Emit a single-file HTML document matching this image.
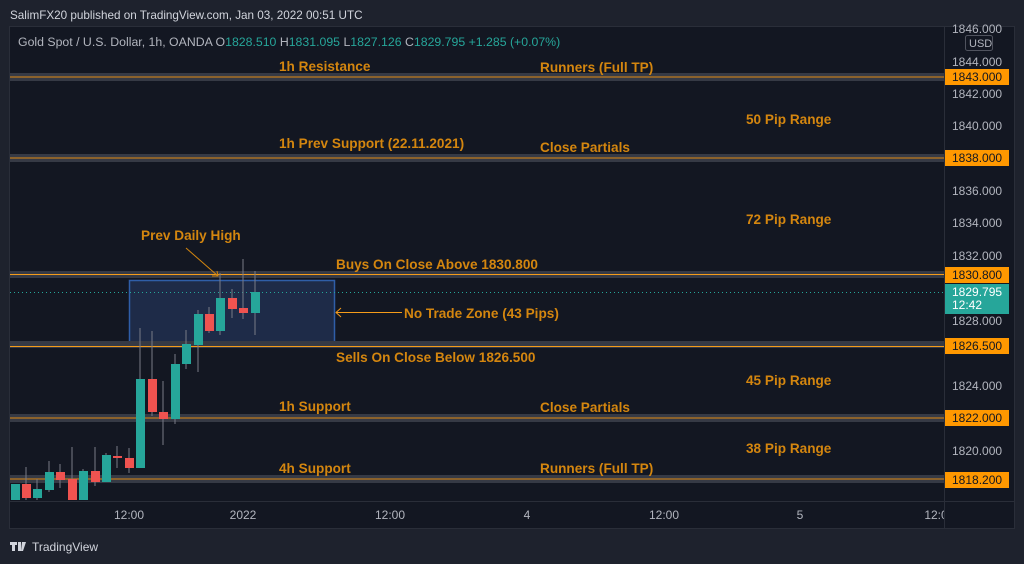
<!DOCTYPE html>
<html><head><meta charset="utf-8"><style>
html,body{margin:0;padding:0;background:#1e222d;width:1024px;height:564px;overflow:hidden}
svg{display:block}
text{font-family:"Liberation Sans",sans-serif}
.lb{fill:#d4860f;font-size:13.6px;font-weight:bold}
.ax{fill:#b2b5be;font-size:12px}
.ol{fill:#131722;font-size:12px}
</style></head><body>
<svg width="1024" height="564" viewBox="0 0 1024 564">
<rect width="1024" height="564" fill="#1e222d"/>
<text x="10" y="19" fill="#d1d4dc" font-size="11.7">SalimFX20 published on TradingView.com, Jan 03, 2022 00:51 UTC</text>
<rect x="9.5" y="26.5" width="1005" height="502" fill="#131722" stroke="#2a2e39"/>
<line x1="944.5" y1="27" x2="944.5" y2="528" stroke="#2a2e39"/>
<line x1="10" y1="501.5" x2="1014" y2="501.5" stroke="#2a2e39"/>
<text x="18" y="46" font-size="12.3" fill="#b2b5be">Gold Spot / U.S. Dollar, 1h, OANDA <tspan>O</tspan><tspan fill="#26a69a">1828.510</tspan>  <tspan>H</tspan><tspan fill="#26a69a">1831.095</tspan>  <tspan>L</tspan><tspan fill="#26a69a">1827.126</tspan>  <tspan>C</tspan><tspan fill="#26a69a">1829.795  +1.285 (+0.07%)</tspan></text>
<rect x="129.5" y="280.5" width="205" height="62" fill="#1e2b48" stroke="#2f5ea8" stroke-width="1.5"/>
<g>
<rect x="10" y="73" width="934" height="8" fill="#363a45"/><line x1="10" y1="77" x2="944" y2="77" stroke="#e08a14"/>
<rect x="10" y="154" width="934" height="8" fill="#363a45"/><line x1="10" y1="158" x2="944" y2="158" stroke="#e08a14"/>
<rect x="10" y="271" width="934" height="7" fill="#363a45"/><line x1="10" y1="274.5" x2="944" y2="274.5" stroke="#f59c1a"/>
<rect x="10" y="341" width="934" height="7" fill="#363a45"/><line x1="10" y1="346.5" x2="944" y2="346.5" stroke="#f59c1a"/>
<rect x="10" y="414" width="934" height="8" fill="#363a45"/><line x1="10" y1="418" x2="944" y2="418" stroke="#e08a14"/>
<rect x="10" y="475" width="934" height="8" fill="#363a45"/><line x1="10" y1="479" x2="944" y2="479" stroke="#e08a14"/>
</g>
<line x1="10" y1="292.5" x2="944" y2="292.5" stroke="#26a69a" stroke-dasharray="1,3"/>
<g stroke="#787b86" stroke-width="1">
<line x1="26" y1="467" x2="26" y2="500"/><line x1="37" y1="479" x2="37" y2="500"/><line x1="49" y1="461" x2="49" y2="492"/><line x1="60" y1="464" x2="60" y2="488"/><line x1="72" y1="447" x2="72" y2="500"/><line x1="83" y1="469" x2="83" y2="500"/><line x1="95" y1="447" x2="95" y2="486"/><line x1="106" y1="453" x2="106" y2="482"/><line x1="117" y1="446" x2="117" y2="468"/><line x1="129" y1="448" x2="129" y2="473"/><line x1="140" y1="328" x2="140" y2="468"/><line x1="152" y1="331" x2="152" y2="416"/><line x1="163" y1="381" x2="163" y2="445"/><line x1="175" y1="354" x2="175" y2="424"/><line x1="186" y1="330" x2="186" y2="369"/><line x1="198" y1="310" x2="198" y2="372"/><line x1="209" y1="307" x2="209" y2="333"/><line x1="220" y1="273" x2="220" y2="335"/><line x1="232" y1="289" x2="232" y2="318"/><line x1="243" y1="259" x2="243" y2="319"/><line x1="255" y1="271" x2="255" y2="335"/>
</g>
<g fill="#26a69a">
<rect x="11" y="484" width="9" height="16"/><rect x="33" y="489" width="9" height="9"/><rect x="45" y="472" width="9" height="18"/><rect x="79" y="471" width="9" height="29"/><rect x="102" y="455" width="9" height="27"/><rect x="136" y="379" width="9" height="89"/><rect x="171" y="364" width="9" height="55"/><rect x="182" y="344" width="9" height="20"/><rect x="194" y="314" width="9" height="31"/><rect x="216" y="298" width="9" height="33"/><rect x="251" y="292" width="9" height="21"/>
</g>
<g fill="#ef5350">
<rect x="22" y="484" width="9" height="14"/><rect x="56" y="472" width="9" height="8"/><rect x="68" y="479" width="9" height="21"/><rect x="91" y="471" width="9" height="11"/><rect x="113" y="456" width="9" height="2"/><rect x="125" y="458" width="9" height="10"/><rect x="148" y="379" width="9" height="33"/><rect x="159" y="412" width="9" height="7"/><rect x="205" y="314" width="9" height="17"/><rect x="228" y="298" width="9" height="11"/><rect x="239" y="308" width="9" height="5"/>
</g>
<line x1="186" y1="248" x2="218" y2="276" stroke="#d4860f"/>
<path d="M212 276 L218 276 L217 271" fill="none" stroke="#d4860f"/>
<line x1="336" y1="312.5" x2="402" y2="312.5" stroke="#f59c1a"/>
<path d="M341 308 L336 312.5 L341 317" fill="none" stroke="#f59c1a"/>
<text class="lb" x="279" y="71">1h Resistance</text>
<text class="lb" x="540" y="72">Runners (Full TP)</text>
<text class="lb" x="746" y="124">50 Pip Range</text>
<text class="lb" x="279" y="148">1h Prev Support (22.11.2021)</text>
<text class="lb" x="540" y="152">Close Partials</text>
<text class="lb" x="746" y="224">72 Pip Range</text>
<text class="lb" x="141" y="240">Prev Daily High</text>
<text class="lb" x="336" y="269">Buys On Close Above 1830.800</text>
<text class="lb" x="404" y="318">No Trade Zone (43 Pips)</text>
<text class="lb" x="336" y="362">Sells On Close Below 1826.500</text>
<text class="lb" x="746" y="385">45 Pip Range</text>
<text class="lb" x="279" y="411">1h Support</text>
<text class="lb" x="540" y="412">Close Partials</text>
<text class="lb" x="746" y="453">38 Pip Range</text>
<text class="lb" x="279" y="473">4h Support</text>
<text class="lb" x="540" y="473">Runners (Full TP)</text>
<g class="ax">
<text x="952" y="33">1846.000</text>
<text x="952" y="98">1842.000</text>
<text x="952" y="130">1840.000</text>
<text x="952" y="195">1836.000</text>
<text x="952" y="227">1834.000</text>
<text x="952" y="260">1832.000</text>
<text x="952" y="325">1828.000</text>
<text x="952" y="390">1824.000</text>
<text x="952" y="455">1820.000</text>
</g>
<rect x="965.5" y="35.5" width="27" height="15" rx="2" fill="#131722" stroke="#50535e"/>
<text x="969" y="47" font-size="11" fill="#b2b5be">USD</text>
<text x="952" y="66" class="ax">1844.000</text>
<rect x="945" y="69" width="64" height="16" fill="#ff9800"/><text class="ol" x="952" y="81">1843.000</text>
<rect x="945" y="150" width="64" height="16" fill="#ff9800"/><text class="ol" x="952" y="162">1838.000</text>
<rect x="945" y="267" width="64" height="16" fill="#ff9800"/><text class="ol" x="952" y="279">1830.800</text>
<rect x="945" y="284" width="64" height="30" fill="#26a69a"/><text x="952" y="296" font-size="12" fill="#fff">1829.795</text><text x="952" y="309" font-size="12" fill="#fff">12:42</text>
<rect x="945" y="338" width="64" height="16" fill="#ff9800"/><text class="ol" x="952" y="350">1826.500</text>
<rect x="945" y="410" width="64" height="16" fill="#ff9800"/><text class="ol" x="952" y="422">1822.000</text>
<rect x="945" y="472" width="64" height="16" fill="#ff9800"/><text class="ol" x="952" y="484">1818.200</text>
<g class="ax" text-anchor="middle">
<text x="129" y="519">12:00</text><text x="243" y="519">2022</text><text x="390" y="519">12:00</text><text x="527" y="519">4</text><text x="664" y="519">12:00</text><text x="800" y="519">5</text><text x="936" y="519">12:0</text>
</g>
<rect x="944" y="502" width="70" height="26" fill="#131722"/>
<line x1="944.5" y1="502" x2="944.5" y2="528" stroke="#2a2e39"/>
<path d="M10 542h7v3h-2v6h-3v-6h-2z M18 542h3v9h-3z M22 542h4l-3 9h-2z" fill="#d1d4dc"/>
<text x="32" y="551" font-size="12" fill="#d1d4dc">TradingView</text>
</svg>
</body></html>
